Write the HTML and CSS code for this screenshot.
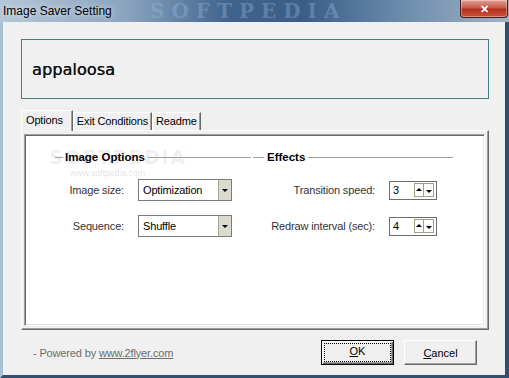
FILE: index.html
```html
<!DOCTYPE html>
<html lang="en">

<head>
    <meta charset="UTF-8">
    <title>Image Saver Setting</title>
    <link rel="stylesheet" href="styles.css">
</head>

<body>
    <div class="window">
        <div class="titlebar">
            <span class="title">Image Saver Setting</span>
            <span class="title-mark">SOFTPEDIA</span>
            <button class="close">&#10005;</button>
        </div>

        <div class="client">
            <div class="header">appaloosa</div>

            <div class="tabs">
                <div class="tab active">Options</div>
                <div class="tab">Exit Conditions</div>
                <div class="tab">Readme</div>
            </div>

            <div class="panel">
                <div class="panel-inner">
                    <span class="wm-logo">SOFTPEDIA<sup>&trade;</sup></span>
                    <span class="wm-url">www.softpedia.com</span>

                    <div class="group group-image">
                        <div class="group-title">Image Options</div>
                        <div class="fields">
                            <label>Image size:</label>
                            <div class="combo"><span>Optimization</span><span class="combo-btn"></span></div>
                            <label>Sequence:</label>
                            <div class="combo"><span>Shuffle</span><span class="combo-btn"></span></div>
                        </div>
                    </div>

                    <div class="group group-effects">
                        <div class="group-title">Effects</div>
                        <div class="fields">
                            <label>Transition speed:</label>
                            <div class="spin"><span>3</span><span class="spin-btns"><i class="up"></i><i class="down"></i></span></div>
                            <label>Redraw interval (sec):</label>
                            <div class="spin"><span>4</span><span class="spin-btns"><i class="up"></i><i class="down"></i></span></div>
                        </div>
                    </div>
                </div>
            </div>

            <div class="footer">
                <p class="powered">- Powered by <a href="#">www.2flyer.com</a></p>
                <button class="btn default"><span class="focus"><u>O</u>K</span></button>
                <button class="btn"><u>C</u>ancel</button>
            </div>
        </div>
    </div>
</body>

</html>
```

FILE: styles.css
```css
* {
    box-sizing: border-box;
    margin: 0;
    padding: 0;
}

body {
    font-family: "Liberation Sans", Arial, sans-serif;
    font-size: 11px;
    letter-spacing: -0.15px;
    color: #000;
    background: #f0f0f0;
}

.window {
    width: 509px;
    height: 378px;
    display: flex;
    flex-direction: column;
    background: #3b5a7c;
}

/* title bar */
.titlebar {
    position: relative;
    height: 22px;
    display: flex;
    align-items: flex-start;
    overflow: hidden;
    background: linear-gradient(90deg, #b4c6d8 0%, #8aa4bf 25%, #3f638d 45%, #3a5e88 60%, #6f8eae 80%, #9fb2c6 100%);
}

.title {
    position: relative;
    z-index: 1;
    line-height: 22px;
    padding-left: 3px;
    font-size: 12px;
    letter-spacing: 0;
    color: #000;
    text-shadow: 0 0 6px rgba(255, 255, 255, 0.9);
}

.title-mark {
    position: absolute;
    left: 150px;
    top: 1px;
    line-height: 20px;
    font-family: "DejaVu Serif", serif;
    font-weight: bold;
    font-size: 20px;
    letter-spacing: 7px;
    color: rgba(160, 190, 220, 0.35);
}

.close {
    margin-left: auto;
    margin-right: 1px;
    width: 48px;
    height: 18px;
    border: 1px solid #4a1c18;
    border-top: none;
    border-radius: 0 0 4px 4px;
    background: linear-gradient(#e3a197, #c85a49 45%, #b3301c 55%, #c9513a);
    color: #fff;
    font-size: 11px;
    font-weight: bold;
    line-height: 16px;
    box-shadow: inset 0 0 0 1px rgba(255, 255, 255, 0.35);
}

/* client area */
.client {
    flex: 1;
    display: flex;
    flex-direction: column;
    background: #f0f0f0;
    border-left: 3px solid #a9bfd6;
    border-right: 4px solid #2f4e70;
    border-bottom: 3px solid #2f4e70;
    padding: 17px 16px 0 18px;
}

.header {
    height: 60px;
    border: 1px solid #3d807c;
    padding-left: 10px;
    display: flex;
    align-items: center;
    font-family: "DejaVu Sans", sans-serif;
    font-size: 16px;
    letter-spacing: 0.1px;
    color: #111;
    text-shadow: 0.3px 0 #111;
}

/* tabs */
.tabs {
    display: flex;
    align-items: flex-end;
    height: 20px;
    margin-top: 11px;
    position: relative;
    z-index: 1;
}

.tab {
    height: 18px;
    line-height: 17px;
    padding: 0 3px 0 3px;
    background: #f0f0f0;
    border-top: 1px solid #fff;
    border-left: 1px solid #fff;
    border-right: 1px solid #696969;
    box-shadow: inset -1px 0 #a0a0a0;
    border-top-left-radius: 2px;
    white-space: nowrap;
}

.tab.active {
    height: 21px;
    margin-bottom: -1px;
    padding: 1px 9px 0 4px;
    line-height: 16px;
}

/* tab page */
.panel {
    height: 200px;
    display: flex;
    flex-direction: column;
    padding: 3px 3px 3px 2px;
    background: #f0f0f0;
    border-top: 1px solid #fff;
    border-left: 1px solid #fff;
    border-right: 1px solid #696969;
    border-bottom: 1px solid #696969;
    box-shadow: inset -1px -1px #a0a0a0;
}

.panel-inner {
    position: relative;
    flex: 1;
    display: flex;
    gap: 2px;
    padding: 15px 0 0 30px;
    background: #fff;
    border: 1px solid;
    border-color: #a0a0a0 #fff #fff #a0a0a0;
    box-shadow: inset 1px 1px #696969, inset -1px -1px #e3e3e3;
}

.wm-logo {
    position: absolute;
    left: 24px;
    top: 11px;
    font-family: "DejaVu Sans", sans-serif;
    font-weight: bold;
    font-size: 19px;
    letter-spacing: 2px;
    color: rgba(0, 0, 0, 0.07);
}

.wm-logo sup {
    font-size: 8px;
    font-weight: normal;
}

.wm-url {
    position: absolute;
    left: 45px;
    top: 33px;
    font-size: 9px;
    color: rgba(0, 0, 0, 0.14);
}

.group {
    position: relative;
}

.group-image {
    width: 196px;
}

.group-effects {
    width: 200px;
}

.group-title {
    display: flex;
    align-items: center;
    gap: 2px;
    height: 14px;
    font-size: 11.5px;
    font-weight: bold;
    letter-spacing: 0;
    color: #000;
}

.group-title::before,
.group-title::after {
    content: "";
    height: 1px;
    background: #a0a0a0;
}

.group-title::before {
    width: 8px;
}

.group-effects .group-title::before {
    width: 11px;
    margin-right: 1px;
}

.group-title::after {
    flex: 1;
    margin-left: 1px;
}

.fields {
    display: grid;
    align-items: center;
    column-gap: 14px;
    row-gap: 14px;
    margin-top: 15px;
    grid-auto-rows: 22px;
}

.group-image .fields {
    grid-template-columns: 69px 94px;
}

.group-effects .fields {
    grid-template-columns: 122px 48px;
}

.fields label {
    text-align: right;
    color: #333;
    white-space: nowrap;
}

/* combo box */
.combo {
    height: 22px;
    display: flex;
    border: 1px solid #7a7a7a;
    background: #fff;
}

.combo span:first-child {
    flex: 1;
    padding-left: 4px;
    line-height: 20px;
}

.combo-btn {
    width: 13px;
    background: #dcd9cf;
    border-left: 1px solid #a8a594;
    display: flex;
    align-items: center;
    justify-content: center;
}

.combo-btn::after {
    content: "";
    border-left: 3px solid transparent;
    border-right: 3px solid transparent;
    border-top: 3px solid #000;
}

/* spin box */
.spin {
    height: 19px;
    display: flex;
    align-items: center;
    border: 1px solid #6d6d6d;
    background: #fff;
    padding: 0 2px 0 3px;
}

.spin span:first-child {
    flex: 1;
}

.spin-btns {
    display: flex;
}

.spin-btns i {
    width: 10px;
    height: 14px;
    border: 1px solid #a39d85;
    display: flex;
    align-items: center;
    justify-content: center;
}

.spin-btns i + i {
    border-left: none;
}

.spin-btns i::after {
    content: "";
    border-left: 3px solid transparent;
    border-right: 3px solid transparent;
}

.spin-btns .up::after {
    border-bottom: 3px solid #000;
    margin-top: -2px;
}

.spin-btns .down::after {
    border-top: 3px solid #000;
    margin-top: 3px;
}

/* footer */
.footer {
    display: flex;
    align-items: center;
    gap: 10px;
    margin-top: 10px;
    padding: 0 12px;
}

.powered {
    flex: 1;
    color: #6d6d6d;
}

.powered a {
    color: #6d6d6d;
}

.btn {
    width: 73px;
    height: 25px;
    font-family: "Liberation Sans", Arial, sans-serif;
    font-size: 11px;
    color: #000;
    background: #f0f0f0;
    border: 1px solid;
    border-color: #fff #696969 #696969 #fff;
    box-shadow: inset -1px -1px #a0a0a0;
}

.btn.default {
    border: 1px solid #000;
    box-shadow: inset 1px 1px #fff, inset -1px -1px #696969, inset -2px -2px #a0a0a0;
    padding: 3px;
}

.focus {
    display: block;
    height: 100%;
    line-height: 15px;
    outline: 1px dotted #000;
}
```
